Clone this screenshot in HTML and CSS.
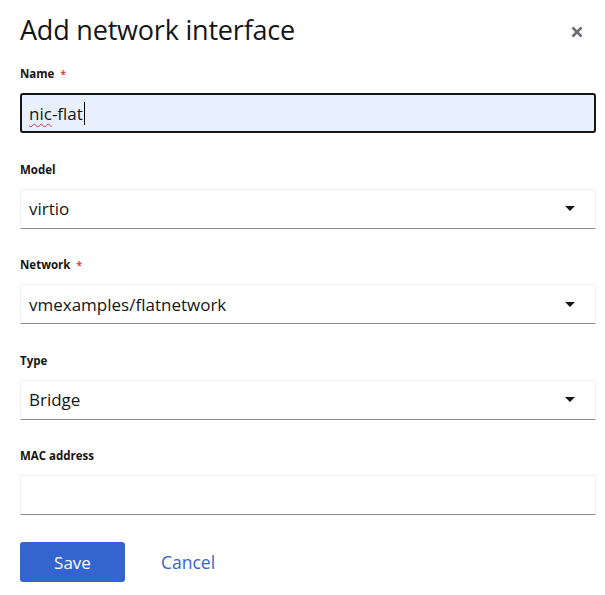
FILE: index.html
```html
<!DOCTYPE html>
<html>
<head>
<meta charset="utf-8">
<link rel="stylesheet" href="styles.css">
</head>
<body>
<div class="modal">
  <div class="header">
    <h1 class="title">Add network interface</h1>
    <button class="close" aria-label="Close">
      <svg width="12" height="12" viewBox="0 0 12 12"><path d="M1.5 1.5 L10.5 10.5 M10.5 1.5 L1.5 10.5" stroke="#6a6e73" stroke-width="2.6" stroke-linecap="butt"/></svg>
    </button>
  </div>
  <form class="form">
    <div class="group first">
      <div class="label">Name <span class="req">*</span></div>
      <div class="field focused"><span class="spell">nic</span>-flat<span class="caret"></span></div>
    </div>
    <div class="group">
      <div class="label">Model</div>
      <div class="field select"><span>virtio</span><span class="arrow"></span></div>
    </div>
    <div class="group">
      <div class="label">Network <span class="req">*</span></div>
      <div class="field select"><span>vmexamples/flatnetwork</span><span class="arrow"></span></div>
    </div>
    <div class="group">
      <div class="label">Type</div>
      <div class="field select"><span>Bridge</span><span class="arrow"></span></div>
    </div>
    <div class="group">
      <div class="label">MAC address</div>
      <div class="field"></div>
    </div>
    <div class="actions">
      <button type="button" class="btn primary">Save</button>
      <button type="button" class="btn link">Cancel</button>
    </div>
  </form>
</div>
</body>
</html>
```
FILE: styles.css
```css
html, body {
  margin: 0;
  padding: 0;
  background: #ffffff;
}
body {
  font-family: "Open Sans", "Liberation Sans", sans-serif;
  color: #151515;
}
.modal {
  padding: 12px 9px 0 20px;
}
.header {
  display: flex;
  align-items: center;
  justify-content: space-between;
  height: 36px;
}
.title {
  margin: 0;
  font-size: 27px;
  font-weight: 400;
  line-height: 36px;
  color: #151515;
  letter-spacing: -0.2px;
}
.close {
  border: 0;
  background: none;
  padding: 0;
  margin: 4px 13px 0 0;
  width: 12px;
  height: 12px;
  display: flex;
}
.form {
  display: flex;
  flex-direction: column;
}
.group {
  display: flex;
  flex-direction: column;
  margin-top: 27.5px;
}
.group.first {
  margin-top: 17px;
}
.label {
  font-size: 11.5px;
  font-weight: 700;
  line-height: 18px;
  height: 18px;
  margin-bottom: 10px;
  color: #151515;
}
.req {
  color: #d9463b;
  margin-left: 3px;
  font-size: 10px;
  font-weight: 700;
  vertical-align: top;
}
.field {
  box-sizing: border-box;
  height: 40px;
  width: 576px;
  border: 1px solid #f0f0f0;
  border-bottom-color: #8a8d90;
  background: #fff;
  display: flex;
  align-items: center;
  padding: 0 8px;
  font-size: 17px;
  color: #151515;
}
.field.focused {
  border: 2px solid #151515;
  border-radius: 3px;
  background: #e8f0fe;
  padding: 0 7px;
}
.spell {
  text-decoration: underline wavy #e03030;
  text-decoration-thickness: 1px;
  text-underline-offset: 3px;
}
.caret {
  display: inline-block;
  width: 1px;
  height: 23px;
  background: #000;
  margin-left: 1px;
}
.select {
  justify-content: space-between;
  padding-right: 20px;
}
.arrow {
  width: 0;
  height: 0;
  border-left: 5px solid transparent;
  border-right: 5px solid transparent;
  border-top: 5px solid #151515;
}
.actions {
  display: flex;
  align-items: center;
  gap: 16px;
  margin-top: 27px;
}
.btn {
  font-family: "Open Sans", "Liberation Sans", sans-serif;
  font-size: 17px;
  height: 40px;
  border-radius: 3px;
  border: 0;
  cursor: pointer;
}
.btn.primary {
  width: 105px;
  background: #3465cf;
  color: #fff;
}
.btn.link {
  background: none;
  color: #3465cf;
  padding: 0 20px;
  font-size: 17.5px;
}
```
